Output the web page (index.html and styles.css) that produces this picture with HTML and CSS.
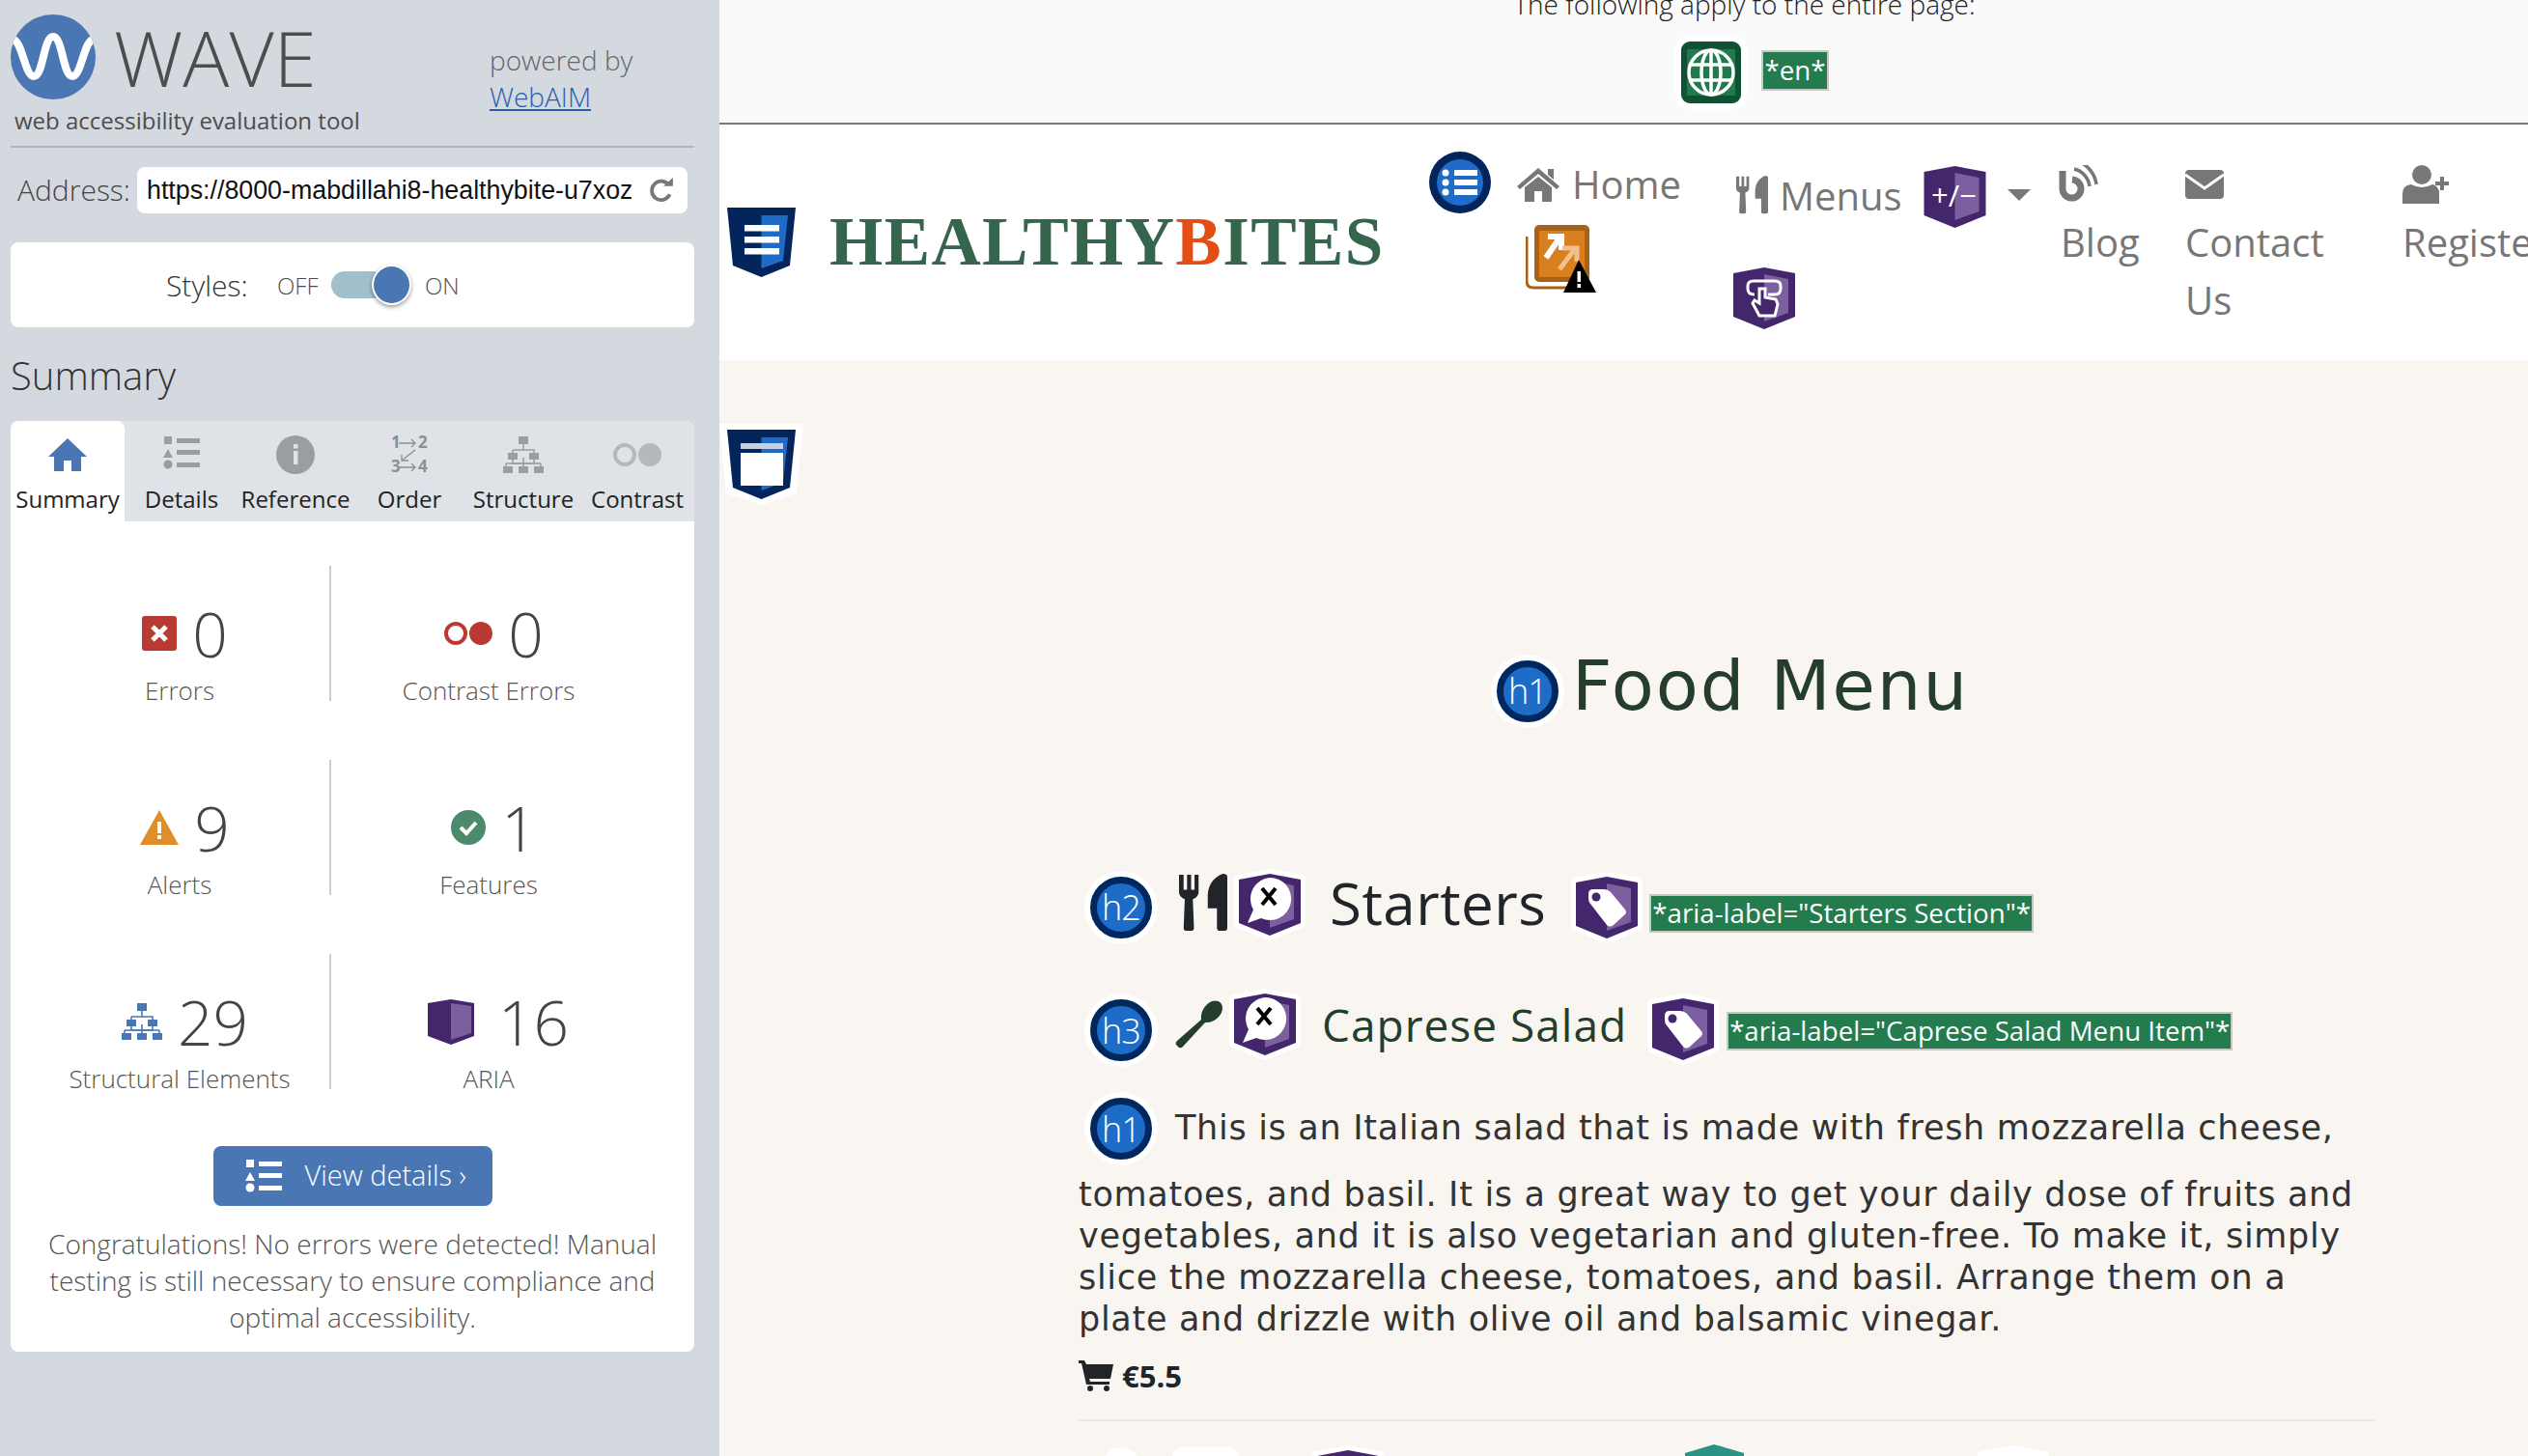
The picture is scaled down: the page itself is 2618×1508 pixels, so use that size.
FILE: index.html
```html
<!DOCTYPE html>
<html lang="en">
<head>
  <meta charset="UTF-8" />
  <meta name="viewport" content="width=device-width, initial-scale=1.0"/>
  <title>WAVE - HealthyBites</title>
  <link rel="stylesheet" href="styles.css">
</head>
<body>
  <svg class="defs" aria-hidden="true">
    <symbol id="shield" viewBox="-6 -6 76 76">
      <polygon points="0,6 32,0 64,6 64,51 32,64 0,51" fill="#fff" stroke="#fff" stroke-width="10" stroke-linejoin="round"/>
      <polygon points="0,6 32,0 64,6 64,51 32,64 0,51" fill="#43266b"/>
      <polygon points="32,7 57,12 57,47 32,56" fill="#7b5f9f"/>
    </symbol>
    <symbol id="speech" viewBox="-6 -6 76 76">
      <use href="#shield" x="-6" y="-6" width="76" height="76"/>
      <path d="M32 4a22 22 0 1 1-9 42l-14 5 6-14a22 22 0 0 1 17-33z" fill="#fff"/>
      <path d="M24 15l14 17M38 15L24 32" stroke="#000" stroke-width="4"/>
    </symbol>
    <symbol id="tag" viewBox="-6 -6 76 76">
      <use href="#shield" x="-6" y="-6" width="76" height="76"/>
      <path d="M18 13H29Q33 13 36 16L51 34Q53 37 51 39L39 50Q35 53 32 50L15 28Q13 26 13 22V18Q13 13 18 13Z" fill="#fff"/>
      <circle cx="21" cy="21" r="4.5" fill="#43266b"/>
    </symbol>
    <symbol id="tree" viewBox="0 0 42 38">
      <path d="M21 8V14M10 14H32V18M10 14V18M21 22V28M10 22V28H32V22M21 28V31M3 28V31M39 28V31" fill="none" stroke="currentColor" stroke-width="1.6"/>
      <path d="M3 28H39" stroke="currentColor" stroke-width="1.6"/>
      <path d="M16 0h10v8H16zM5 17h10v7H5zM27 17h10v7H27zM0 31h10v7H0zM16 31h10v7H16zM32 31h10v7H32z" fill="currentColor"/>
    </symbol>
    <symbol id="fork" viewBox="0 0 42 62" preserveAspectRatio="none">
      <path d="M0 1h4v16h3V1h3.500v16h3V1H17V20Q17 25 12 27L13 58Q13 61 10 61H7Q4 61 4 58L5 27Q0 25 0 20Z" fill="currentColor"/>
      <path d="M38 0Q42 0 42 3V58Q42 61 39 61H36Q33 61 33 58V37H25V22Q26 6 38 0Z" fill="currentColor"/>
    </symbol>
  </svg>

  <aside class="wave">
    <header class="wave-head">
      <div class="wave-brand">
        <div class="wave-logo">
          <svg width="88" height="88" viewBox="0 0 88 88">
            <clipPath id="wclip"><circle cx="44" cy="44" r="44"/></clipPath>
            <circle cx="44" cy="44" r="44" fill="#4a76b3"/>
            <path clip-path="url(#wclip)" d="M0 26C12 22 14 64 24 64C34 64 34 23 44 23C54 23 54 64 64 64C74 64 76 22 88 26" fill="none" stroke="#fff" stroke-width="8"/>
          </svg>
          <span class="wave-name">WAVE</span>
        </div>
        <div class="wave-tagline">web accessibility evaluation tool</div>
      </div>
      <div class="wave-by">powered by<br><a href="#">WebAIM</a></div>
    </header>

    <div class="address">
      <label>Address:</label>
      <div class="address-box">
        <span class="address-url">https://8000-mabdillahi8-healthybite-u7xozuzpz1x.ws-eu</span>
        <svg width="26" height="28" viewBox="0 0 24 26"><path d="M20 17A9 9 0 1 1 19 8" fill="none" stroke="#777" stroke-width="3.500"/><path d="M14 9h9V1z" fill="#777"/></svg>
      </div>
    </div>

    <div class="styles-card">
      <span class="styles-label">Styles:</span>
      <span class="styles-off">OFF</span>
      <span class="toggle"><span class="toggle-knob"></span></span>
      <span class="styles-on">ON</span>
    </div>

    <h2 class="wave-title">Summary</h2>

    <section class="panel">
      <div class="tabs">
        <div class="tab active">
          <svg width="40" height="34" viewBox="0 0 40 34"><path d="M20 0L40 19H34V34H24V23H16V34H6V19H0Z" fill="#4a76b3"/></svg>
          <span>Summary</span>
        </div>
        <div class="tab">
          <svg width="38" height="38" viewBox="0 0 38 38"><path d="M1 0h8v8H1zM14 2h24v5H14zM5 13l5 9H0zM14 14h24v5H14zM14 27h24v5H14z" fill="#9a9ea3"/><circle cx="5" cy="29" r="4.500" fill="#9a9ea3"/></svg>
          <span>Details</span>
        </div>
        <div class="tab">
          <svg width="40" height="40" viewBox="0 0 40 40"><circle cx="20" cy="20" r="20" fill="#9a9ea3"/><rect x="18" y="16" width="4.500" height="14" fill="#dfe2e7"/><rect x="18" y="9" width="4.500" height="4.500" fill="#dfe2e7"/></svg>
          <span>Reference</span>
        </div>
        <div class="tab">
          <svg width="38" height="40" viewBox="0 0 38 40" class="order-icon">
            <text x="0" y="13">1</text><text x="28" y="13">2</text><text x="0" y="38">3</text><text x="28" y="38">4</text>
            <path d="M8 8h17M21 4l4 4-4 4M8 33h17M21 29l4 4-4 4M25 15L11 26M11 20v6h7" fill="none" stroke="#8c9095" stroke-width="1.300"/>
          </svg>
          <span>Order</span>
        </div>
        <div class="tab">
          <svg class="tab-tree" width="42" height="38"><use href="#tree"/></svg>
          <span>Structure</span>
        </div>
        <div class="tab">
          <svg width="50" height="24" viewBox="0 0 50 24"><circle cx="12" cy="12" r="10" fill="none" stroke="#b5b8bd" stroke-width="4"/><circle cx="38" cy="12" r="12" fill="#b5b8bd"/></svg>
          <span>Contrast</span>
        </div>
      </div>

      <div class="stats">
        <div class="stat stat-left">
          <div class="stat-num">
            <svg width="36" height="36" viewBox="0 0 36 36"><rect width="36" height="36" rx="3" fill="#b93a32"/><path d="M11 11l14 14M25 11L11 25" stroke="#fff" stroke-width="5"/></svg>
            <span>0</span>
          </div>
          <div class="stat-label">Errors</div>
        </div>
        <div class="stat stat-right">
          <div class="stat-num">
            <svg width="50" height="24" viewBox="0 0 50 24"><circle cx="12" cy="12" r="10" fill="none" stroke="#b93a32" stroke-width="4"/><circle cx="38" cy="12" r="12" fill="#b93a32"/></svg>
            <span>0</span>
          </div>
          <div class="stat-label">Contrast Errors</div>
        </div>
        <div class="stat stat-left">
          <div class="stat-num">
            <svg width="40" height="36" viewBox="0 0 40 36"><path d="M20 0L40 36H0Z" fill="#e08e2b"/><rect x="18" y="12" width="4" height="12" fill="#fff"/><rect x="18" y="26" width="4" height="4" fill="#fff"/></svg>
            <span>9</span>
          </div>
          <div class="stat-label">Alerts</div>
        </div>
        <div class="stat stat-right">
          <div class="stat-num">
            <svg width="36" height="36" viewBox="0 0 36 36"><circle cx="18" cy="18" r="18" fill="#4b8a6b"/><path d="M10 18l6 6 10-11" fill="none" stroke="#fff" stroke-width="4"/></svg>
            <span>1</span>
          </div>
          <div class="stat-label">Features</div>
        </div>
        <div class="stat stat-left">
          <div class="stat-num">
            <svg class="tree-blue" width="42" height="38"><use href="#tree"/></svg>
            <span>29</span>
          </div>
          <div class="stat-label">Structural Elements</div>
        </div>
        <div class="stat stat-right">
          <div class="stat-num stat-num-aria">
            <svg width="48" height="47" viewBox="0 0 48 47"><polygon points="0,4 24,0 48,4 48,38 24,47 0,38" fill="#43266b"/><polygon points="24,4 45,7 45,35 24,42" fill="#7b5f9f"/></svg>
            <span>16</span>
          </div>
          <div class="stat-label">ARIA</div>
        </div>
      </div>

      <button class="view-btn">
        <svg width="38" height="34" viewBox="0 0 38 34" preserveAspectRatio="none"><path d="M1 0h8v8H1zM14 2h24v5H14zM5 13l5 9H0zM14 14h24v5H14zM14 27h24v5H14z" fill="#fff"/><circle cx="5" cy="29" r="4.500" fill="#fff"/></svg>
        View details ›
      </button>
      <p class="congrats">Congratulations! No errors were detected! Manual testing is still necessary to ensure compliance and optimal accessibility.</p>
    </section>
  </aside>

  <main class="page">
    <div class="doc-band">
      <div class="doc-note">The following apply to the entire page:</div>
      <div class="doc-icons">
        <svg class="globe" width="74" height="76" viewBox="-6 -6 74 76">
          <rect x="-6" y="-6" width="74" height="76" rx="14" fill="#fff"/>
          <rect width="62" height="64" rx="9" fill="#0f5132"/>
          <rect x="6" y="8" width="50" height="48" fill="#217a4b"/>
          <g fill="none" stroke="#fff" stroke-width="3.500">
            <circle cx="31" cy="32" r="23"/><ellipse cx="31" cy="32" rx="10" ry="23"/>
            <path d="M31 9V55M9 24H53M9 40H53"/>
          </g>
        </svg>
        <span class="wave-text">*en*</span>
      </div>
    </div>

    <header class="site-head">
      <a class="site-logo" href="#">
        <svg class="logo-shield" width="71" height="72" viewBox="0 0 71 72">
          <polygon points="0,0 71,0 65,60 35.500,72 6,60" fill="#03255c"/>
          <polygon points="35.500,8 63,8 58,55 35.500,63" fill="#1f6cc8"/>
          <path d="M18 18H54V24.500H18zM18 30H54V36.500H18zM18 42H54V48.500H18z" fill="#fff"/>
        </svg>
        <span class="site-name">HEALTHY<b>B</b>ITES</span>
      </a>

      <nav class="site-nav">
        <span class="nav-list-ico">
          <svg width="64" height="64" viewBox="0 0 64 64"><circle cx="32" cy="32" r="32" fill="#03255c"/><circle cx="32" cy="32" r="24" fill="#1f6cc8"/><path d="M26 19H50V25H26zM26 29H50V35H26zM26 39H50V45H26z" fill="#fff"/><circle cx="17" cy="22" r="3.500" fill="#fff"/><circle cx="17" cy="32" r="3.500" fill="#fff"/><circle cx="17" cy="42" r="3.500" fill="#fff"/></svg>
        </span>

        <div class="nav-item nav-home">
          <a href="#" class="nav-line">
            <svg width="44" height="35" viewBox="0 0 44 35"><path d="M22 0L44 19L41 22L22 6L3 22L0 19Z" fill="#777"/><path d="M32 1H38V12L32 7zM8 20L22 9L36 20V35H26V24H18V35H8Z" fill="#777"/></svg>
            Home
          </a>
          <svg class="nav-warn" width="73" height="70" viewBox="0 0 73 70">
            <path d="M1 12V58Q1 65 8 65H50" fill="none" stroke="#a96115" stroke-width="3"/>
            <rect x="9" width="57" height="59" rx="5" fill="#a96115"/>
            <rect x="14" y="6" width="47" height="48" fill="#d97f1f"/>
            <path d="M21 34L36 12M23 12H37V26" fill="none" stroke="#fff" stroke-width="6"/>
            <path d="M35 46L50 26M38 24H53V38" fill="none" stroke="#f4bf8e" stroke-width="5"/>
            <path d="M55 36L73 70H39Z" fill="#000"/>
            <rect x="53.500" y="48" width="3.500" height="11" fill="#fff"/><rect x="53.500" y="61" width="3.500" height="4" fill="#fff"/>
          </svg>
        </div>

        <div class="nav-item nav-menus">
          <div class="nav-line">
            <svg class="nav-cutlery" width="33" height="40"><use href="#fork"/></svg>
            <a href="#">Menus</a>
            <svg class="nav-plus" width="65" height="64" viewBox="0 0 64 64">
              <polygon points="0,6 32,0 64,6 64,51 32,64 0,51" fill="#43266b"/>
              <polygon points="32,7 57,12 57,47 32,56" fill="#7b5f9f"/>
              <text x="31" y="42" text-anchor="middle" class="plus-text">+/−</text>
            </svg>
            <span class="caret"></span>
          </div>
          <svg class="nav-tap" width="64" height="64" viewBox="0 0 64 64">
            <polygon points="0,6 32,0 64,6 64,51 32,64 0,51" fill="#43266b"/>
            <polygon points="32,7 57,12 57,47 32,56" fill="#7b5f9f"/>
            <path d="M22 28Q15 28 15 22V19Q15 14 21 14H43Q49 14 49 19V22Q49 28 43 28H36" fill="none" stroke="#fff" stroke-width="3"/>
            <path d="M27 22V37L22 34L20 37L27 50H43L46 38L44 33L33 31V22Z" fill="#43266b" stroke="#fff" stroke-width="3"/>
          </svg>
        </div>

        <div class="nav-item nav-blog">
          <svg width="41" height="40" viewBox="0 0 41 40"><path d="M4 6V24A9.500 9.500 0 1 0 14 15" fill="none" stroke="#777" stroke-width="7"/><path d="M16 4A21 21 0 0 1 32 22M20 -4A30 30 0 0 1 39 20" fill="none" stroke="#777" stroke-width="3.500"/></svg>
          <a href="#">Blog</a>
        </div>

        <div class="nav-item nav-contact">
          <svg class="nav-mail" width="40" height="30" viewBox="0 0 40 30"><rect width="40" height="30" rx="4" fill="#777"/><path d="M0 5L20 19L40 5" fill="none" stroke="#fff" stroke-width="3"/></svg>
          <a href="#">Contact<br>Us</a>
        </div>

        <div class="nav-item nav-register">
          <svg width="49" height="40" viewBox="0 0 49 40"><circle cx="20" cy="10" r="10" fill="#777"/><path d="M0 40V30Q0 21 9 20Q20 26 31 20Q36 21 38 27V40Z" fill="#777"/><path d="M41 12V26M34 19H48" stroke="#777" stroke-width="4"/></svg>
          <a href="#">Register</a>
        </div>
      </nav>
    </header>

    <div class="content">
      <svg class="main-shield" width="87" height="84" viewBox="-8 -6 87 84">
        <polygon points="-8,-6 79,-6 72,66 35.500,78 -1,66" fill="#fff"/>
        <polygon points="0,0 71,0 65,60 35.500,72 6,60" fill="#03255c"/>
        <polygon points="35.500,8 63,8 58,55 35.500,63" fill="#1f6cc8"/>
        <rect x="14" y="14" width="44" height="6" fill="#c4cfe2"/>
        <rect x="14" y="24" width="44" height="34" fill="#fff"/>
      </svg>

      <section class="menu">
        <h1 class="menu-title"><span class="hbadge">h1</span>Food Menu</h1>

        <h2 class="course">
          <span class="hbadge">h2</span>
          <svg class="course-fork" width="50" height="60"><use href="#fork"/></svg>
          <svg class="ico ico-note" width="76" height="76"><use href="#speech"/></svg>
          <span class="course-name">Starters</span>
          <svg class="ico ico-tag" width="76" height="76"><use href="#tag"/></svg>
          <span class="wave-text">*aria-label="Starters Section"*</span>
        </h2>

        <h3 class="dish">
          <span class="hbadge">h3</span>
          <svg class="dish-spoon" width="50" height="50" viewBox="0 0 50 50"><path d="M49 8C49 2 44 -1 38 1C31 4 26 12 27 20L2 42Q0 44 1 46L4 49Q6 50 8 48L31 23C40 24 49 16 49 8Z" fill="#243d2c"/></svg>
          <svg class="ico" width="76" height="76"><use href="#speech"/></svg>
          <span class="dish-name">Caprese Salad</span>
          <svg class="ico ico-tag" width="76" height="76"><use href="#tag"/></svg>
          <span class="wave-text">*aria-label="Caprese Salad Menu Item"*</span>
        </h3>

        <p class="dish-text"><span class="hbadge">h1</span>This is an Italian salad that is made with fresh mozzarella cheese, tomatoes, and basil. It is a great way to get your daily dose of fruits and vegetables, and it is also vegetarian and gluten-free. To make it, simply slice the mozzarella cheese, tomatoes, and basil. Arrange them on a plate and drizzle with olive oil and balsamic vinegar.</p>

        <div class="price">
          <svg width="36" height="32" viewBox="0 0 36 32"><path d="M0 0H6L8 4H36L33 19H11L12 22H32V25H8L3 3H0Z" fill="#212529"/><circle cx="12" cy="29" r="3" fill="#212529"/><circle cx="29" cy="29" r="3" fill="#212529"/></svg>
          <strong>€5.5</strong>
        </div>
        <hr class="rule">

        <!-- next dish, only the tops of its icons show -->
        <div class="next-row">
          <span class="next-badge"></span>
          <span class="next-halo"></span>
          <svg class="next-shield" width="76" height="76"><use href="#shield"/></svg>
          <svg class="next-teal" width="61" height="40" viewBox="0 0 61 40"><polygon points="0,9 30,0 61,9 61,40 0,40" fill="#2a9285"/></svg>
          <svg class="next-last" width="76" height="76" viewBox="-6 -6 76 76"><polygon points="0,6 32,0 64,6 64,51 32,64 0,51" fill="#fff" stroke="#fff" stroke-width="10" stroke-linejoin="round"/></svg>
        </div>
      </section>
    </div>
  </main>
</body>
</html>
```

FILE: styles.css
```css
*{box-sizing:border-box;}
html,body{margin:0;height:100%;}
body{display:flex;height:1508px;overflow:hidden;font-family:"Open Sans",sans-serif;color:#212529;background:#f9f6f2;}
a{color:inherit;text-decoration:none;}
svg{display:block;flex:none;}
.defs{position:absolute;width:0;height:0;}

/* wave sidebar */
.wave{width:745px;flex:none;padding:0 26px 0 11px;background:#d4d9e0;color:#4d4d4d;font-weight:300;}
.wave-head{display:flex;height:153px;border-bottom:2px solid #b0b5bd;}
.wave-brand{width:496px;padding-top:15px;}
.wave-logo{display:flex;align-items:center;gap:19px;height:88px;}
.wave-name{font-size:80px;line-height:88px;}
.wave-tagline{margin:7px 0 0 4px;font-size:24px;line-height:30px;font-weight:400;}
.wave-by{padding-top:43px;font-size:28px;line-height:38px;color:#666;}
.wave-by a{color:#2a5db0;text-decoration:underline;}

.address{display:flex;align-items:center;gap:7px;margin-top:20px;padding-left:7px;}
.address label{font-size:30px;line-height:48px;color:#444;}
.address-box{display:flex;align-items:center;justify-content:space-between;width:570px;height:48px;padding:0 14px 0 10px;background:#fff;border-radius:8px;}
.address-url{width:502px;overflow:hidden;white-space:nowrap;font:26.800px "Liberation Sans",sans-serif;color:#111;}

.styles-card{display:flex;align-items:center;height:88px;margin-top:30px;padding-left:161px;background:#fff;border-radius:8px;}
.styles-label{width:115px;font-size:30px;color:#333;}
.styles-off{width:56px;font-size:24px;}
.toggle{position:relative;width:57px;height:28px;margin-right:25px;background:#a2bfcc;border-radius:14px;}
.toggle-knob{position:absolute;left:42px;top:-7px;width:41px;height:42px;background:#4a76b3;border:2px solid #fff;border-radius:50%;box-shadow:0 2px 4px rgba(0,0,0,.4);}
.styles-on{margin-left:15px;font-size:24px;}

.wave-title{margin:25px 0 22px;font-size:40px;line-height:50px;font-weight:300;color:#333;}

.panel{height:964px;background:#fff;border-radius:8px;overflow:hidden;}
.tabs{display:grid;grid-template-columns:repeat(6,118px);height:104px;background:#dfe2e7;}
.tab{display:flex;flex-direction:column;align-items:center;height:104px;padding-top:15px;font-size:24px;font-weight:400;color:#222;}
.tab svg{height:40px;}
.tab span{margin-top:10px;line-height:32px;white-space:nowrap;}
.tab.active{background:#fff;border-radius:8px 8px 0 0;}
.tab-tree{color:#9a9ea3;}
.tree-blue{color:#4a76b3;}
.order-icon{overflow:visible;}
.order-icon text{font-size:17px;font-weight:700;fill:#8c9095;}

.stats{display:grid;grid-template-columns:332px 1fr;grid-auto-rows:140px;row-gap:61px;padding-top:46px;}
.stat{height:140px;padding-top:30px;text-align:center;}
.stat-left{padding-left:20px;border-right:2px solid #ccc;}
.stat-right{padding-right:50px;}
.stat-num{display:flex;align-items:center;justify-content:center;gap:16px;height:80px;padding-left:11px;font-size:64px;font-weight:300;color:#444;}
.stat-num-aria{gap:25px;padding-left:20px;}
.stat-label{height:36px;font-size:26px;line-height:38px;color:#555;}

.view-btn{display:flex;align-items:center;gap:24px;width:289px;height:62px;margin:59px auto 0;padding:0 0 3px 33px;background:#4a76b3;border:0;border-radius:8px;font:300 29px "Open Sans",sans-serif;color:#fff;}
.view-btn svg{margin-top:3px;}
.congrats{margin:20px 0 0;padding:0 20px;font-size:28px;line-height:38px;text-align:center;color:#555;}

/* page being evaluated */
.page{flex:1;min-width:0;overflow:hidden;}
.doc-band{display:flow-root;height:129px;padding-left:250px;background:#fafafa;border-bottom:2px solid #777;text-align:center;}
.doc-note{margin-top:-16px;font-size:28px;line-height:40px;font-weight:300;color:#222;}
.doc-icons{display:flex;justify-content:center;align-items:center;gap:15px;margin:13px 0 0 16px;}
.doc-icons .wave-text{margin-bottom:5px;}
.wave-text{display:inline-block;height:42px;padding:0 1px;background:#247b4d;border:2px solid #c8c8c8;font-size:27.700px;line-height:36px;font-weight:400;color:#fff;white-space:nowrap;}

.site-head{display:flex;height:244px;background:#fff;}
.site-logo{display:flex;flex:none;width:735px;height:72px;margin-top:86px;padding-left:8px;}
.site-name{margin:-9px 0 0 35px;font:700 71px/88px "Liberation Serif",serif;letter-spacing:1.400px;color:#36654d;}
.site-name b{color:#e24e14;}

.site-nav{display:flex;flex:none;align-items:flex-start;font-size:40px;color:#777;white-space:nowrap;}
.nav-list-ico{margin-top:28px;}
.nav-item{display:flex;flex-direction:column;flex:none;}
.nav-line{display:flex;align-items:center;}
.nav-home{width:227px;margin:37px 0 0 27px;}
.nav-home .nav-line{gap:13px;line-height:50px;}
.nav-warn{margin:17px 0 0 9px;}
.nav-menus{width:334px;margin-top:41px;}
.nav-menus .nav-line{height:64px;}
.nav-cutlery{margin-right:12px;}
.nav-plus{margin:4px 0 0 22px;}
.plus-text{font-size:31px;font-weight:400;fill:#fff;font-family:"Open Sans",sans-serif;}
.caret{margin-left:22px;border-style:solid;border-width:12px 12px 0;border-color:#777 transparent transparent;}
.nav-tap{margin:43px 0 0 -3px;}
.nav-blog{width:131px;margin-top:42px;}
.nav-blog a{margin:10px 0 0 2px;line-height:60px;}
.nav-contact{width:225px;margin-top:47px;}
.nav-contact a{margin-top:15px;line-height:60px;}
.nav-register{margin-top:42px;}
.nav-register a{margin-top:10px;line-height:60px;}

.content{padding:0 0 0 373px;}
.main-shield{margin:66px 0 0 -373px;}
.menu{width:1343px;margin-left:-1px;}

.hbadge{display:inline-flex;align-items:center;justify-content:center;flex:none;width:64px;height:64px;background:#1d6cc8;border:7px solid #00285f;border-radius:50%;box-shadow:0 0 0 6px #fff;font:300 36px "Open Sans",sans-serif;color:#fff;letter-spacing:-1px;}
.ico{margin:-6px;}
.ico-note{margin-top:-2px;}
.ico-tag{margin-top:4px;}
.course .hbadge,.menu-title .hbadge{margin-top:10px;}
.dish .hbadge{margin-top:12px;}

.menu-title{display:flex;align-items:center;justify-content:center;height:67px;margin:154px 0 0;padding-left:12px;font:400 72px/67px "DejaVu Sans",sans-serif;letter-spacing:2px;color:#243d2c;}
.menu-title .hbadge{margin-right:14px;letter-spacing:-1px;}

.course{display:flex;align-items:center;height:67px;margin:157px 0 0;padding-left:12px;font-weight:400;}
.course-fork{margin:0 12px 0 28px;color:#212529;}
.course-name{margin:0 31px 0 30px;font-size:60px;letter-spacing:.5px;color:#212529;}
.course .wave-text{height:40px;margin:0 0 2px 12px;align-self:flex-end;line-height:34px;}

.dish{display:flex;align-items:center;height:66px;margin:60px 0 0;padding-left:12px;font-weight:400;}
.dish-spoon{margin:0 11px 0 24px;}
.dish-name{margin:0 26px 0 27px;font-size:46px;letter-spacing:1px;color:#243d2c;}
.dish .wave-text{height:40px;margin:0 0 6px 13px;align-self:flex-end;line-height:34px;}

.dish-text{margin:43px 0 0;font:35px/43px "DejaVu Sans",sans-serif;letter-spacing:.7px;color:#333;}
.dish-text .hbadge{margin:0 24px 15px 12px;vertical-align:-3px;letter-spacing:-1px;}

.price{display:flex;align-items:center;gap:9px;height:40px;margin-top:17px;font-size:31px;}
.rule{height:2px;margin:25px 0 0;background:#e9e7e3;border:0;}

.next-row{display:flex;align-items:flex-start;height:80px;margin-top:24px;padding-left:23px;}
.next-badge{width:42px;height:42px;margin-top:3px;background:#fff;border-radius:50%;}
.next-halo{width:69px;height:40px;margin:3px 0 0 32px;background:#fff;border-radius:10px 10px 0 0;}
.next-shield{margin-left:75px;}
.next-teal{margin-left:311px;}
.next-last{margin:0 0 0 241px;}
```
